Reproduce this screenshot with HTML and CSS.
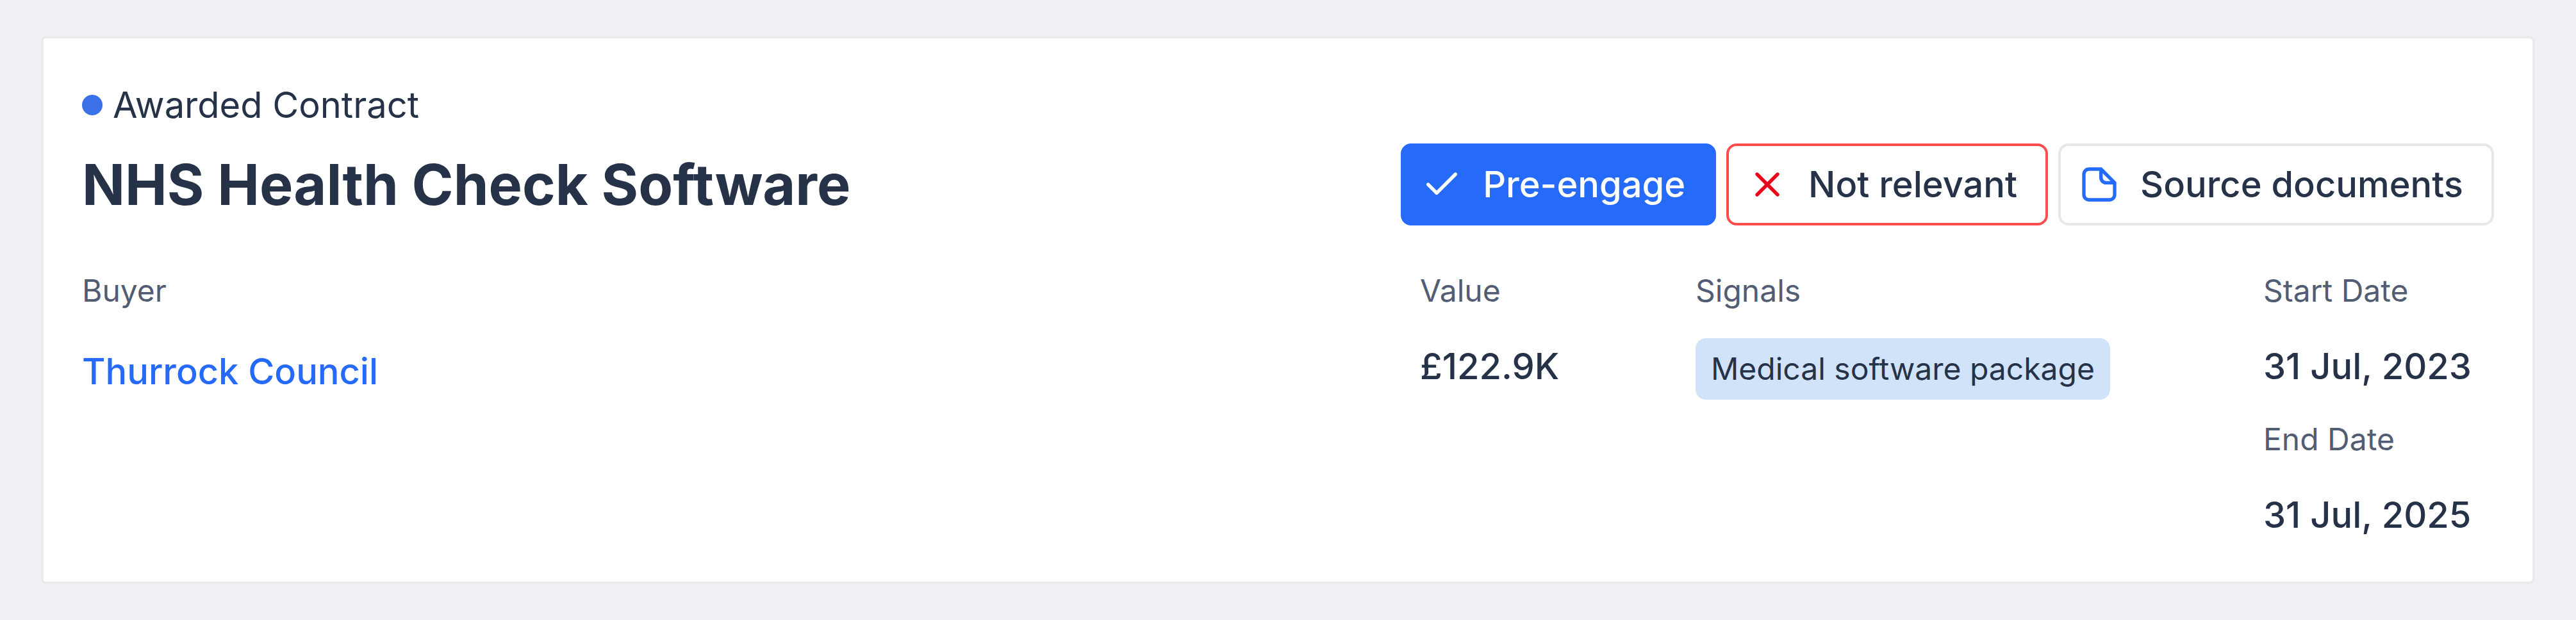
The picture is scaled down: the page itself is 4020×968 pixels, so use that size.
FILE: index.html
```html
<!DOCTYPE html>
<html lang="en">
<head>
  <meta charset="UTF-8">
  <meta name="viewport" content="width=device-width, initial-scale=1.0">
  <title>NHS Health Check Software</title>
  <link rel="stylesheet" href="styles.css">
</head>
<body>
  <main class="card">
    <div class="status"><span class="dot"></span>Awarded Contract</div>
    <div class="header">
      <h1>NHS Health Check Software</h1>
      <div class="actions">
        <button type="button" class="btn btn-primary">
          <svg class="icon" viewBox="0 0 24 24"><path d="M20 6L9 17l-5-5"/></svg>
          Pre-engage
        </button>
        <button type="button" class="btn btn-danger">
          <svg class="icon" viewBox="0 0 24 24"><path d="M18 6L6 18M6 6l12 12"/></svg>
          Not relevant
        </button>
        <button type="button" class="btn btn-source">
          <svg class="icon" viewBox="0 0 24 24"><path d="M13 3H6a3 3 0 0 0-3 3v12a3 3 0 0 0 3 3h12a3 3 0 0 0 3-3v-7M13 3l8 8M13 3v5a3 3 0 0 0 3 3h5"/></svg>
          Source documents
        </button>
      </div>
    </div>
    <div class="details">
      <dl>
        <dt>Buyer</dt>
        <dd><a class="buyer" href="#">Thurrock Council</a></dd>
      </dl>
      <dl>
        <dt>Value</dt>
        <dd>£122.9K</dd>
      </dl>
      <dl>
        <dt>Signals</dt>
        <dd><span class="tag">Medical software package</span></dd>
      </dl>
      <dl>
        <dt>Start Date</dt>
        <dd>31 Jul, 2023</dd>
        <dt>End Date</dt>
        <dd>31 Jul, 2025</dd>
      </dl>
    </div>
  </main>
</body>
</html>
```
FILE: styles.css
```css
* {
  margin: 0;
  padding: 0;
  box-sizing: border-box;
}
body {
  padding: 56px 64px;
  background-color: #f0f1f5;
  color: #263248;
  font-family: Inter, "Liberation Sans", sans-serif;
  font-size: 56px;
  line-height: 88px;
}
.card {
  padding: 60px;
  background-color: #fff;
  border: 4px solid #ebebeb;
  border-radius: 8px;
}
.status {
  display: flex;
  align-items: center;
  gap: 16px;
}
.dot {
  width: 32px;
  height: 32px;
  border-radius: 50%;
  background-color: #3a71e6;
}
.header {
  display: flex;
  justify-content: space-between;
  align-items: center;
  margin-top: 16px;
}
h1 {
  font-size: 88px;
  font-weight: 700;
  line-height: 128px;
}
.actions {
  display: flex;
  gap: 16px;
}
.btn {
  display: flex;
  align-items: center;
  gap: 32px;
  height: 128px;
  padding: 0 44px 0 28px;
  border: 4px solid #e6e7eb;
  border-radius: 16px;
  background-color: #fff;
  color: #263248;
  font: inherit;
  font-weight: 500;
  white-space: nowrap;
  cursor: pointer;
}
.btn-primary {
  background-color: #266afa;
  border-color: #266afa;
  color: #fff;
}
.btn-danger {
  border-color: #ff4d4f;
}
.icon {
  width: 64px;
  height: 64px;
  fill: none;
  stroke: currentColor;
  stroke-width: 2;
  stroke-linecap: round;
  stroke-linejoin: round;
}
.btn-danger .icon {
  color: #eb0519;
}
.btn-source .icon {
  color: #266afa;
}
.details {
  display: grid;
  grid-template-columns: 1fr 430px 886px 360px;
  margin-top: 68px;
}
dt {
  margin-bottom: 40px;
  color: #525d73;
  font-size: 48px;
  line-height: 68px;
}
dd {
  font-weight: 500;
  white-space: nowrap;
}
dd + dt {
  margin-top: 36px;
}
.buyer {
  display: inline-block;
  padding-top: 8px;
  color: #266afa;
  text-decoration: none;
}
.tag {
  display: inline-block;
  padding: 0 24px;
  border-radius: 16px;
  background-color: #d1e3f8;
  font-size: 48px;
  font-weight: 400;
  line-height: 96px;
}
```
